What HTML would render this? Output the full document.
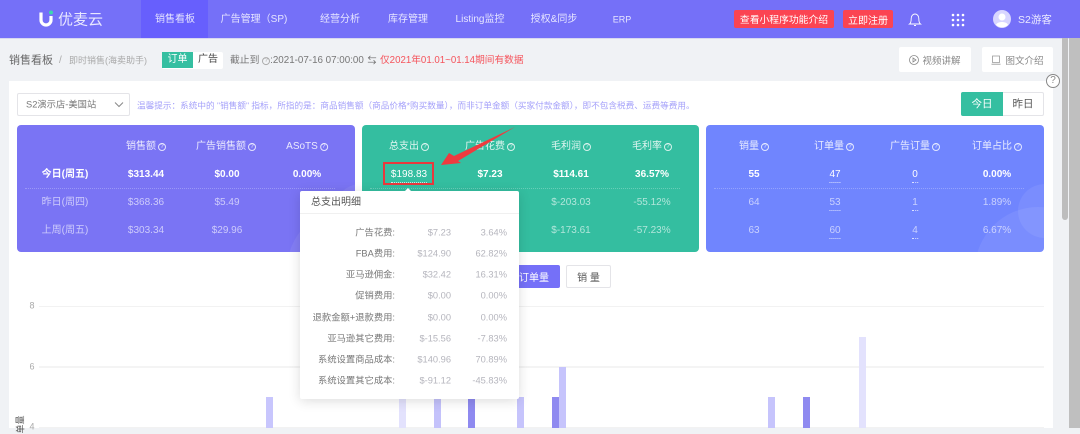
<!DOCTYPE html>
<html><head><meta charset="utf-8"><style>
*{box-sizing:border-box}
html{background:#f0f2f5}
html,body{margin:0;padding:0}
body{width:1080px;height:428px;overflow:hidden;position:relative;background:#f0f2f5;font-family:"Liberation Sans","Noto Sans CJK SC",sans-serif;font-size:10px;color:#666;filter:blur(.3px)}
.a{position:absolute}
.t{position:absolute;white-space:nowrap;line-height:1}
.c{transform:translate(-50%,-50%)}
.r{transform:translate(-100%,-50%)}
.l{transform:translateY(-50%)}
.nav{color:#e6e5ff;font-size:10px}
.card{position:absolute;top:125px;height:127px;border-radius:4px;overflow:hidden}
.w{color:#fff;font-weight:bold;font-size:10px}
.h{color:rgba(255,255,255,.85);font-size:10px}
.d{color:rgba(255,255,255,.62);font-size:10px}
.q{display:inline-block;width:8px;height:8px;border:.8px solid rgba(255,255,255,.8);border-radius:50%;font-size:6px;line-height:6.400px;text-align:center;margin-left:2px;vertical-align:1px;font-weight:normal}
.u{border-bottom:1px dotted rgba(255,255,255,.75);padding-bottom:2px}
.dot{position:absolute;top:63px;height:0;border-top:1px dotted rgba(255,255,255,.25)}
.circ{position:absolute;border-radius:50%;background:rgba(255,255,255,.07)}
.btn{position:absolute;background:#fff;border-radius:2px;color:#888;font-size:9.5px;display:flex;align-items:center;justify-content:center}
.lb{color:#777;font-size:9.300px}
.v{color:#b5b5bd;font-size:9.3px}
</style></head><body>
<div class="a" style="left:0;top:0;width:1080px;height:39px;background:#7570f8;border-bottom:1px solid #d8d8f0"></div>
<div class="a" style="left:141px;top:0;width:67px;height:38px;background:#675ffd"></div>
<svg class="a" style="left:36px;top:9px" width="20" height="20" viewBox="0 0 20 20"><path d="M5 3.5V11a5 5 0 0 0 10 0V7" fill="none" stroke="#fff" stroke-width="3.2"/><circle cx="15" cy="3.5" r="2" fill="#3cd6b0"/></svg>
<div class="t l" style="left:58px;top:20px;font-size:15px;color:#e8e7ff">优麦云</div>
<div class="t c nav" style="left:175px;top:20px">销售看板</div>
<div class="t c nav" style="left:254px;top:20px">广告管理（SP)</div>
<div class="t c nav" style="left:340px;top:20px">经营分析</div>
<div class="t c nav" style="left:408px;top:20px">库存管理</div>
<div class="t c nav" style="left:480px;top:20px">Listing监控</div>
<div class="t c nav" style="left:554px;top:20px">授权&amp;同步</div>
<div class="t c nav" style="left:622px;top:20px;font-size:9px">ERP</div>
<div class="btn" style="left:734px;top:10px;width:100px;height:18px;background:#fb4452;color:#fff;font-size:9.800px">查看小程序功能介绍</div>
<div class="btn" style="left:843px;top:10px;width:50px;height:18px;background:#fb4452;color:#fff;font-size:10px">立即注册</div>
<svg class="a" style="left:908px;top:12px" width="14" height="15" viewBox="0 0 14 15"><path d="M1.5 12h11c-1.500-1-1.700-3-1.700-5.500C10.800 4 9.200 2 7 2S3.200 4 3.200 6.500C3.200 9 3 11 1.500 12zM6 13.500h2" fill="none" stroke="#fff" stroke-width=".9"/></svg>
<svg class="a" style="left:951px;top:13px" width="14" height="14" fill="#fff"><circle cx="2" cy="2" r="1.300"/><circle cx="7" cy="2" r="1.300"/><circle cx="12" cy="2" r="1.300"/><circle cx="2" cy="7" r="1.300"/><circle cx="7" cy="7" r="1.300"/><circle cx="12" cy="7" r="1.300"/><circle cx="2" cy="12" r="1.300"/><circle cx="7" cy="12" r="1.300"/><circle cx="12" cy="12" r="1.300"/></svg>
<svg class="a" style="left:993px;top:10px" width="18" height="18"><circle cx="9" cy="9" r="9" fill="#d8d6ff"/><circle cx="9" cy="7" r="3.500" fill="#fff"/><path d="M3 15c1-4 11-4 12 0a9 9 0 0 1-12 0z" fill="#fff"/></svg>
<div class="t l" style="left:1018px;top:20px;font-size:10.5px;color:#ecebff">S2游客</div>

<div class="t l" style="left:9px;top:61px;font-size:11px;color:#666">销售看板</div>
<div class="t l" style="left:59px;top:61px;font-size:10px;color:#aaa">/</div>
<div class="t l" style="left:69px;top:61px;font-size:9px;color:#aaa">即时销售(海卖助手)</div>
<div class="a" style="left:162px;top:52px;width:61px;height:17px;background:#fff;border-radius:2px"></div>
<div class="a" style="left:162px;top:52px;width:31px;height:16px;background:#35bfa1;color:#fff;text-align:center;line-height:16px;font-size:10px">订单</div>
<div class="t c" style="left:208px;top:60px;font-size:10px;color:#444">广告</div>
<div class="t l" style="left:230px;top:61px;font-size:9.800px;color:#777">截止到 <span class="q" style="margin:0;border-color:#aaa;color:#aaa">?</span>:2021-07-16 07:00:00</div>
<div class="t c" style="left:372px;top:61px;font-size:9px;color:#666">⇆</div>
<div class="t l" style="left:380px;top:61px;font-size:9.700px;color:#f5545c">仅2021年01.01~01.14期间有数据</div>
<div class="btn" style="left:899px;top:47px;width:72px;height:25px"><svg width="10" height="10" style="margin-right:3px"><circle cx="5" cy="5" r="4.500" fill="none" stroke="#888" stroke-width=".8"/><path d="M4 3l3 2-3 2z" fill="none" stroke="#888" stroke-width=".8"/></svg>视频讲解</div>
<div class="btn" style="left:982px;top:47px;width:71px;height:25px"><svg width="10" height="10" style="margin-right:4px"><path d="M1.500 1h7v6.500h-7zM.5 9.200h9" fill="none" stroke="#999" stroke-width=".8"/></svg>图文介绍</div>

<div class="a" style="left:9px;top:81px;width:1044px;height:347px;background:#fff"></div>
<div class="a" style="left:1062px;top:38px;width:6px;height:182px;background:#bdbdbd;border-radius:0 0 3px 3px"></div>
<div class="a" style="left:1069px;top:38px;width:11px;height:390px;background:#bfbfbf"></div>
<div class="a" style="left:1046px;top:74px;width:14px;height:14px;border:1px solid #888;border-radius:50%;background:#fff;color:#888;text-align:center;font-size:10px;line-height:12px">?</div>

<div class="a" style="left:17px;top:93px;width:113px;height:23px;background:#fff;border:1px solid #e4e4e8;border-radius:2px"></div>
<div class="t l" style="left:26px;top:105px;font-size:9.300px;color:#777">S2演示店-美国站</div>
<svg class="a" style="left:114px;top:102px" width="10" height="6"><path d="M1 .5l4 4 4-4" fill="none" stroke="#888"/></svg>
<div class="t l" style="left:137px;top:106px;font-size:8.650px;color:#a5a1fa">温馨提示：系统中的 "销售额" 指标，所指的是：商品销售额（商品价格*购买数量），而非订单金额（买家付款金额），即不包含税费、运费等费用。</div>
<div class="a" style="left:961px;top:92px;width:83px;height:24px;border:1px solid #e4e4e8;border-radius:2px;background:#fff"></div>
<div class="a" style="left:961px;top:92px;width:42px;height:24px;background:#35bfa1;border-radius:2px 0 0 2px;color:#fff;text-align:center;line-height:24px;font-size:10.5px">今日</div>
<div class="t c" style="left:1023px;top:104px;font-size:10.5px;color:#555">昨日</div>

<!-- purple -->
<div class="card" style="left:17px;width:338px;background:#7a74f4"><div class="circ" style="left:317px;top:59px;width:54px;height:54px"></div><div class="circ" style="left:270px;top:82px;width:126px;height:126px"></div><div class="dot" style="left:8px;width:310px"></div></div>
<!-- green -->
<div class="card" style="left:362px;width:337px;background:#34bea0"><div class="dot" style="left:8px;width:310px"></div></div>
<!-- blue -->
<div class="card" style="left:706px;width:338px;background:#7085fe"><div class="circ" style="left:312px;top:59px;width:54px;height:54px"></div><div class="circ" style="left:269px;top:82px;width:126px;height:126px"></div><div class="dot" style="left:8px;width:310px"></div></div>

<div class="t c h" style="left:146px;top:147px">销售额<span class="q">?</span></div>
<div class="t c h" style="left:226px;top:147px">广告销售额<span class="q">?</span></div>
<div class="t c h" style="left:307px;top:147px">ASoTS<span class="q">?</span></div>
<div class="t c w" style="left:65px;top:175px">今日(周五)</div>
<div class="t c w" style="left:146px;top:175px">$313.44</div>
<div class="t c w" style="left:227px;top:175px">$0.00</div>
<div class="t c w" style="left:307px;top:175px">0.00%</div>
<div class="t c d" style="left:65px;top:203px">昨日(周四)</div>
<div class="t c d" style="left:146px;top:203px">$368.36</div>
<div class="t c d" style="left:227px;top:203px">$5.49</div>
<div class="t c d" style="left:65px;top:231px">上周(周五)</div>
<div class="t c d" style="left:146px;top:231px">$303.34</div>
<div class="t c d" style="left:227px;top:231px">$29.96</div>

<div class="t c h" style="left:409px;top:147px">总支出<span class="q">?</span></div>
<div class="t c h" style="left:490px;top:147px">广告花费<span class="q">?</span></div>
<div class="t c h" style="left:571px;top:147px">毛利润<span class="q">?</span></div>
<div class="t c h" style="left:652px;top:147px">毛利率<span class="q">?</span></div>
<div class="t c" style="left:409px;top:175px;color:#fff;font-size:10px"><span class="u">$198.83</span></div>
<div class="t c w" style="left:490px;top:175px">$7.23</div>
<div class="t c w" style="left:571px;top:175px">$114.61</div>
<div class="t c w" style="left:652px;top:175px">36.57%</div>
<div class="t c d" style="left:571px;top:203px">$-203.03</div>
<div class="t c d" style="left:652px;top:203px">-55.12%</div>
<div class="t c d" style="left:571px;top:231px">$-173.61</div>
<div class="t c d" style="left:652px;top:231px">-57.23%</div>

<div class="t c h" style="left:754px;top:147px">销量<span class="q">?</span></div>
<div class="t c h" style="left:834px;top:147px">订单量<span class="q">?</span></div>
<div class="t c h" style="left:915px;top:147px">广告订量<span class="q">?</span></div>
<div class="t c h" style="left:997px;top:147px">订单占比<span class="q">?</span></div>
<div class="t c w" style="left:754px;top:175px">55</div>
<div class="t c" style="left:835px;top:175px;color:#fff;font-size:10px"><span class="u">47</span></div>
<div class="t c" style="left:915px;top:175px;color:#fff;font-size:10px"><span class="u">0</span></div>
<div class="t c w" style="left:997px;top:175px">0.00%</div>
<div class="t c d" style="left:754px;top:203px">64</div>
<div class="t c d" style="left:835px;top:203px"><span class="u">53</span></div>
<div class="t c d" style="left:915px;top:203px"><span class="u">1</span></div>
<div class="t c d" style="left:997px;top:203px">1.89%</div>
<div class="t c d" style="left:754px;top:231px">63</div>
<div class="t c d" style="left:835px;top:231px"><span class="u">60</span></div>
<div class="t c d" style="left:915px;top:231px"><span class="u">4</span></div>
<div class="t c d" style="left:997px;top:231px">6.67%</div>

<div class="a" style="left:383px;top:162px;width:51px;height:23px;border:2px solid #e8383d"></div>
<svg class="a" style="left:430px;top:120px" width="95" height="55"><polygon points="11,45 19,33 24,36 85,7 28,41 31,43" fill="#ee3b3f"/></svg>

<!-- buttons -->
<div class="btn" style="left:500px;top:265px;width:60px;height:23px;background:#7570f8;color:#fff;font-size:10px;padding:0 10px 0 18px">订单量</div>
<div class="btn" style="left:566px;top:265px;width:45px;height:23px;border:1px solid #e4e4e8;color:#555;font-size:10px">销 量</div>

<!-- chart -->
<div class="a" style="left:39px;top:306px;width:1005px;height:1px;background:#f2f2f2"></div>
<div class="a" style="left:39px;top:366px;width:1005px;height:2px;background:#f4f4f4"></div>
<div class="a" style="left:39px;top:427px;width:1005px;height:1px;background:#f2f2f2"></div>
<div class="t c" style="left:32px;top:306px;font-size:9px;color:#aaa">8</div>
<div class="t c" style="left:32px;top:367px;font-size:9px;color:#aaa">6</div>
<div class="t c" style="left:32px;top:427px;font-size:9px;color:#aaa">4</div>
<div class="t" style="left:12px;top:420px;font-size:9px;color:#555;transform:rotate(-90deg)">单量</div>
<div class="a" style="left:266px;top:397px;width:7px;height:31px;background:#c8c6fd"></div>
<div class="a" style="left:399px;top:397px;width:7px;height:31px;background:#e3e2fd"></div>
<div class="a" style="left:434px;top:397px;width:7px;height:31px;background:#c4c2fb"></div>
<div class="a" style="left:468px;top:397px;width:7px;height:31px;background:#8f8af0"></div>
<div class="a" style="left:517px;top:397px;width:7px;height:31px;background:#c6c4fc"></div>
<div class="a" style="left:552px;top:397px;width:7px;height:31px;background:#8f8af0"></div>
<div class="a" style="left:559px;top:367px;width:7px;height:61px;background:#c6c4fc"></div>
<div class="a" style="left:768px;top:397px;width:7px;height:31px;background:#c6c4fc"></div>
<div class="a" style="left:803px;top:397px;width:7px;height:31px;background:#8f8af0"></div>
<div class="a" style="left:859px;top:337px;width:7px;height:91px;background:#e3e2fd"></div>

<!-- popup -->
<div class="a" style="left:300px;top:191px;width:219px;height:208px;background:#fff;border-radius:2px;box-shadow:0 2px 12px rgba(0,0,0,.14)"></div>
<div class="a" style="left:405px;top:188px;width:0;height:0;border-left:3px solid transparent;border-right:3px solid transparent;border-bottom:3px solid #fff"></div>
<div class="a" style="left:300px;top:213px;width:219px;height:1px;background:#f0f0f0"></div>
<div class="t l" style="left:311px;top:203px;font-size:10px;color:#555">总支出明细</div>

<div class="t r lb" style="left:395px;top:233px">广告花费:</div><div class="t r v" style="left:451px;top:233px">$7.23</div><div class="t r v" style="left:507px;top:233px">3.64%</div>
<div class="t r lb" style="left:395px;top:254px">FBA费用:</div><div class="t r v" style="left:451px;top:254px">$124.90</div><div class="t r v" style="left:507px;top:254px">62.82%</div>
<div class="t r lb" style="left:395px;top:275px">亚马逊佣金:</div><div class="t r v" style="left:451px;top:275px">$32.42</div><div class="t r v" style="left:507px;top:275px">16.31%</div>
<div class="t r lb" style="left:395px;top:296px">促销费用:</div><div class="t r v" style="left:451px;top:296px">$0.00</div><div class="t r v" style="left:507px;top:296px">0.00%</div>
<div class="t r lb" style="left:395px;top:318px">退款金额+退款费用:</div><div class="t r v" style="left:451px;top:318px">$0.00</div><div class="t r v" style="left:507px;top:318px">0.00%</div>
<div class="t r lb" style="left:395px;top:339px">亚马逊其它费用:</div><div class="t r v" style="left:451px;top:339px">$-15.56</div><div class="t r v" style="left:507px;top:339px">-7.83%</div>
<div class="t r lb" style="left:395px;top:360px">系统设置商品成本:</div><div class="t r v" style="left:451px;top:360px">$140.96</div><div class="t r v" style="left:507px;top:360px">70.89%</div>
<div class="t r lb" style="left:395px;top:381px">系统设置其它成本:</div><div class="t r v" style="left:451px;top:381px">$-91.12</div><div class="t r v" style="left:507px;top:381px">-45.83%</div>
</body></html>
